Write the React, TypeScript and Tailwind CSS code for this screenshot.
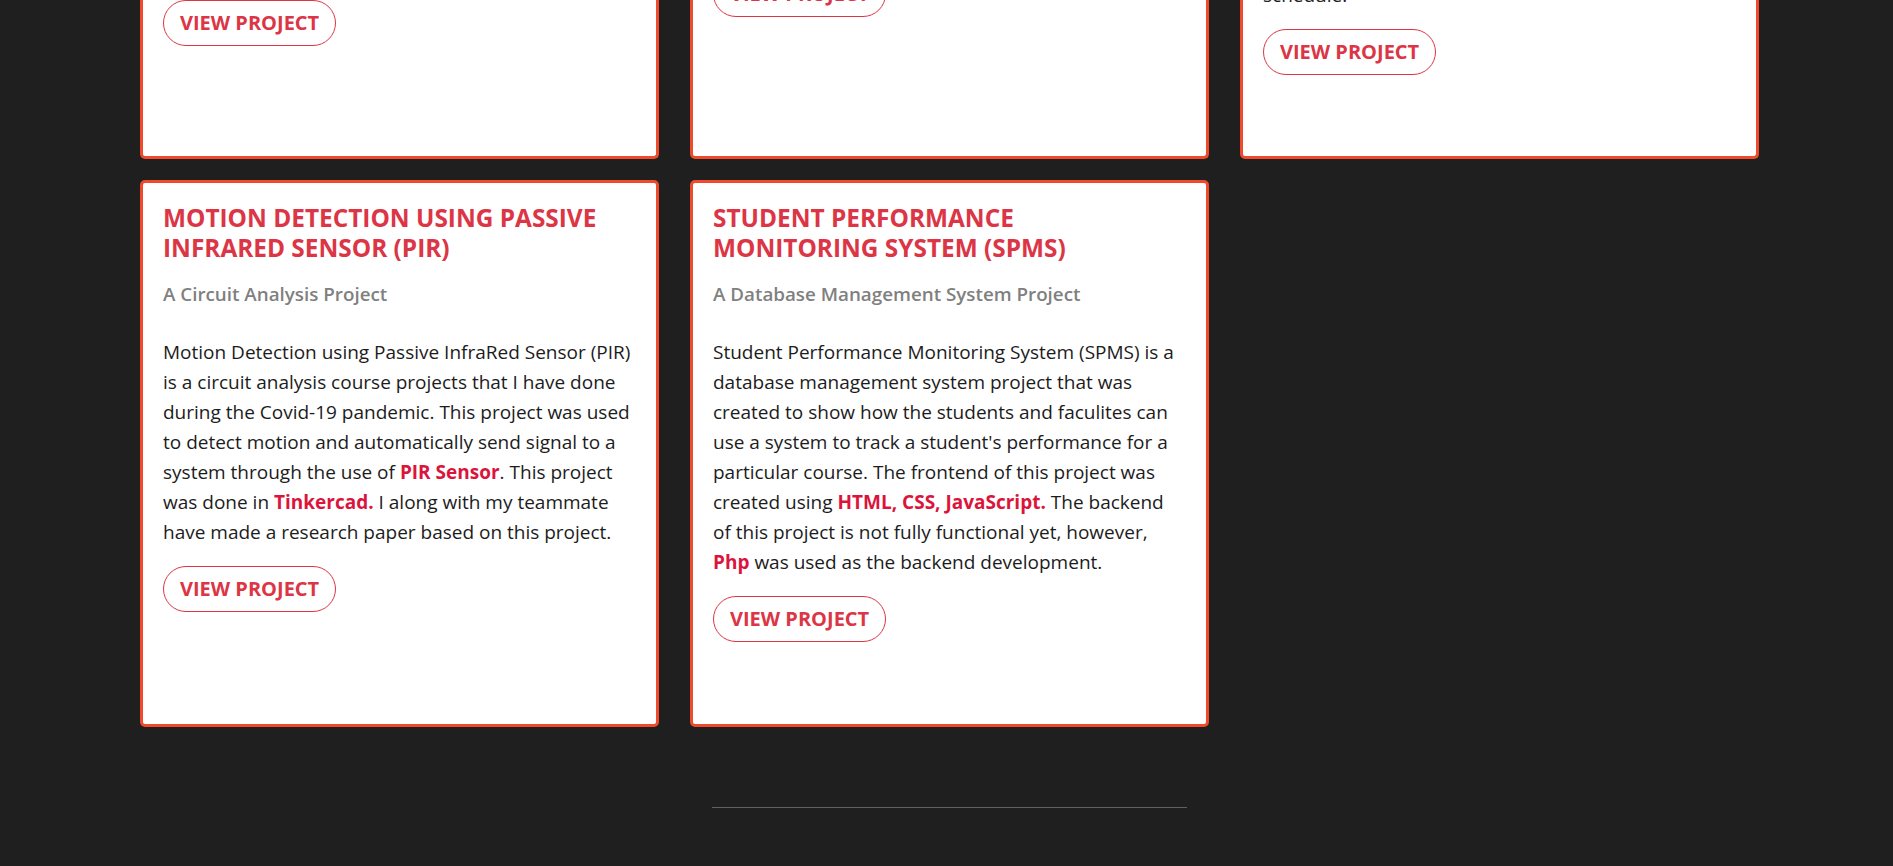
import type { ReactNode } from "react";

interface ProjectCardProps {
  title: string;
  subtitle: string;
  children: ReactNode;
}

const ViewButton = ({ className = "mt-[19px]" }: { className?: string }) => {
  return (
    <a
      href="#"
      className={`${className} flex h-[46px] items-center self-start rounded-full border border-[#dc3545] px-4 text-[20px] leading-none font-bold text-[#dc3545] uppercase`}
    >
      View Project
    </a>
  );
};

const Hl = ({ children }: { children: ReactNode }) => (
  <span className="font-bold text-[#dc143c]">{children}</span>
);

const ProjectCard = ({ title, subtitle, children }: ProjectCardProps) => {
  return (
    <div className="flex flex-col rounded-[5px] border-[3px] border-[#ef4a2c] bg-white px-5 pt-5 pb-[82px]">
      <h3 className="pr-6 text-[24.4px] leading-[30px] font-bold text-[#dc3545] uppercase">
        {title}
      </h3>
      <p className="mt-[17px] text-[18.8px] leading-[28px] font-semibold text-[#808080]">
        {subtitle}
      </p>
      <p className="mt-[29px] text-[19px] leading-[30px] text-[#1c1c1c]">
        {children}
      </p>
      <ViewButton />
    </div>
  );
};

export default function App() {
  return (
    <div className="min-h-screen bg-[#1f1f1f] font-['Open_Sans',sans-serif]">
      <div className="ml-[140px] w-[1619px]">
        {/* PREVIOUS ROW (scrolled past) */}
        <div className="grid h-[159px] grid-cols-3 gap-x-[31px]">
          <div className="flex flex-col overflow-hidden rounded-b-[5px] border-[3px] border-t-0 border-[#ef4a2c] bg-white px-5">
            <ViewButton className="mt-0" />
          </div>
          <div className="flex flex-col overflow-hidden rounded-b-[5px] border-[3px] border-t-0 border-[#ef4a2c] bg-white px-5">
            <ViewButton className="-mt-[29px]" />
          </div>
          <div className="flex flex-col overflow-hidden rounded-b-[5px] border-[3px] border-t-0 border-[#ef4a2c] bg-white px-5">
            <p className="-mt-[20px] text-[19px] leading-[30px] text-[#1c1c1c]">
              schedule.
            </p>
            <ViewButton />
          </div>
        </div>

        <div className="mt-[21px] grid grid-cols-3 gap-x-[31px]">
          <ProjectCard
            title="Motion Detection using Passive Infrared Sensor (PIR)"
            subtitle="A Circuit Analysis Project"
          >
            Motion Detection using Passive InfraRed Sensor (PIR) is a circuit
            analysis course projects that I have done during the Covid-19
            pandemic. This project was used to detect motion and automatically
            send signal to a system through the use of <Hl>PIR Sensor</Hl>. This
            project was done in <Hl>Tinkercad.</Hl> I along with my teammate
            have made a research paper based on this project.
          </ProjectCard>
          <ProjectCard
            title="Student Performance Monitoring System (SPMS)"
            subtitle="A Database Management System Project"
          >
            Student Performance Monitoring System (SPMS) is a database
            management system project that was created to show how the students
            and faculites can use a system to track a student's performance for
            a particular course. The frontend of this project was created using{" "}
            <Hl>HTML, CSS, JavaScript.</Hl> The backend of this project is not
            fully functional yet, however, <Hl>Php</Hl> was used as the backend
            development.
          </ProjectCard>
        </div>

        <div className="mx-auto mt-[80px] h-px w-[475px] bg-[#606060]" />
      </div>
    </div>
  );
}
